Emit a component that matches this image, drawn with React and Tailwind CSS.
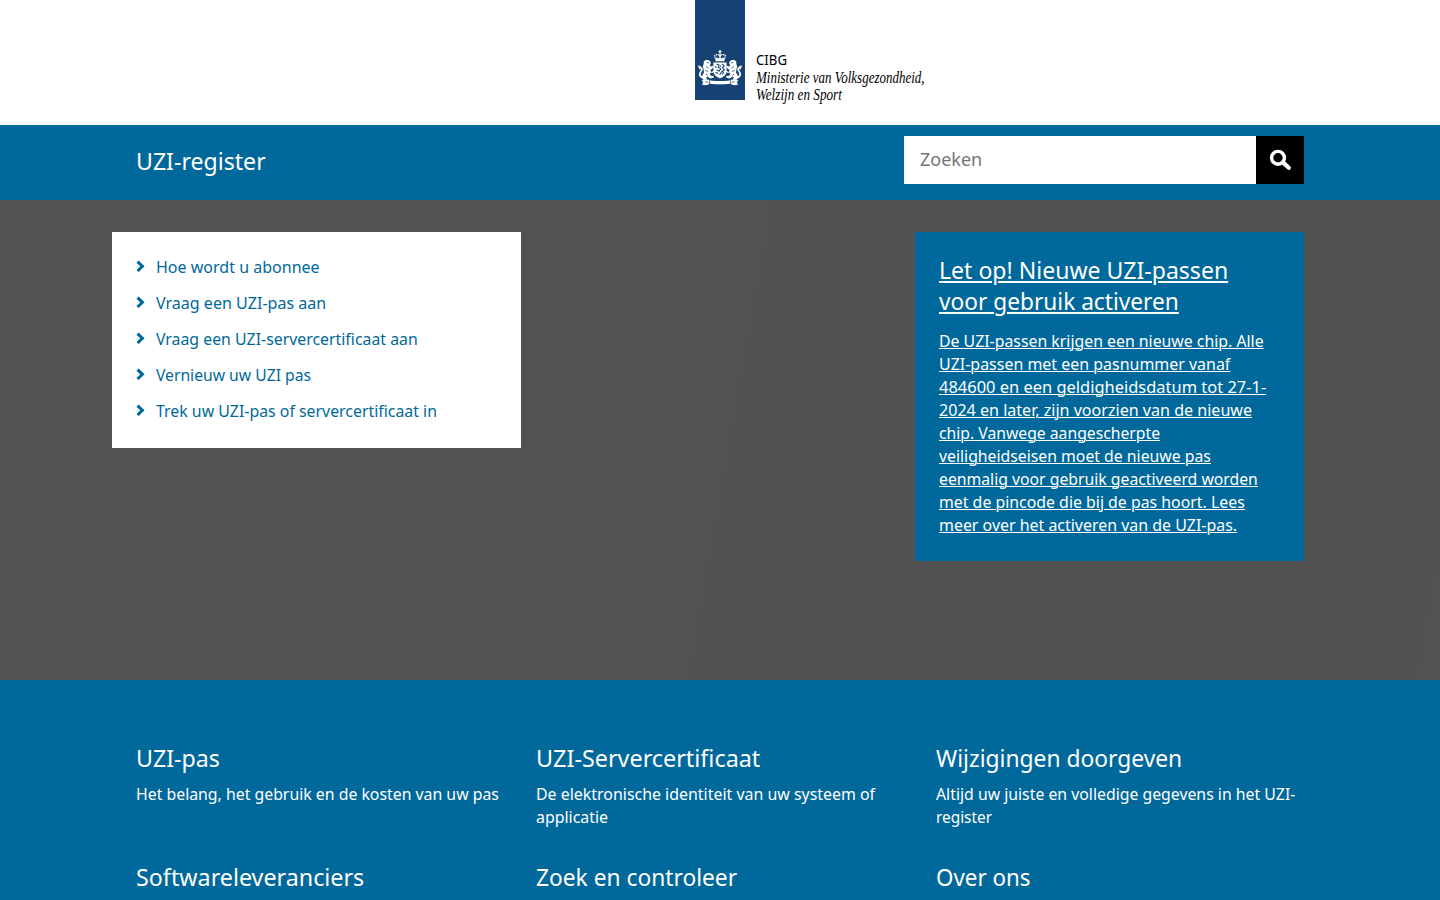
import { useLayoutEffect, useRef, useState } from "react";

// A line of text condensed or widened horizontally to a given width.
function Line({ w, children, className = "" }) {
  const ref = useRef(null);
  const [scale, setScale] = useState(1);
  useLayoutEffect(() => {
    setScale(w / ref.current.offsetWidth);
  }, [w]);
  return (
    <span className="block h-[1lh]" style={{ width: w }}>
      <span
        ref={ref}
        className={`inline-block origin-left whitespace-nowrap align-top ${className}`}
        style={{ transform: `scaleX(${scale})` }}
      >
        {children}
      </span>
    </span>
  );
}

function Lion() {
  return (
    <g>
      <path d="M8.6 16.6 10.4 14.9 13.4 15 15.8 17 15.6 19.2 14.6 20.4 16.4 21.6 18 20.4 18.6 22 16.8 24.2 15.4 24.4 16 27 14.8 29.4 16.6 31 18.6 30.8 18.8 32.8 15 33.4 12.4 31.6 11 32.8 12.6 34.4 8.6 35 6.4 32.8 7.6 29.8 9 27.4 8.4 23.6 7.8 21 8.8 19Z" />
      <path d="M4.6 23.4Q8.4 22.4 6.4 25.6Q3.8 29 5.6 31.6L8 32.4" fill="none" stroke="white" strokeWidth="1.7" />
      <path d="M2.8 20.6 5.4 21 6.6 22.8 4.8 24.4 3.8 22.8Z" />
      <path d="M16.4 27.6 19.4 26.2" stroke="white" strokeWidth="1.3" />
      <path d="M11.2 21.6 13.4 23M10.4 25.4 13.2 26.6M12 17.6 14 17.9M10.8 29.2 12.6 30.2" stroke="#154273" strokeWidth=".8" />
    </g>
  );
}

function Emblem() {
  return (
    <svg viewBox="0 0 50 45" className="h-[45px] w-[50px]" fill="white">
      <Lion />
      <g transform="translate(50 0) scale(-1 1)">
        <Lion />
      </g>
      <path d="M24.4 5h1.2v1.3h1.1v1h-1.1v1.6h-1.2V7.3h-1.1v-1h1.1z" />
      <path d="M20.4 13Q18.6 10.2 21 9.6Q23.2 9.2 25 11.2Q26.8 9.2 29 9.6Q31.4 10.2 29.6 13" fill="none" stroke="white" strokeWidth="1.2" strokeDasharray="1.5 .5" />
      <path d="M24.3 9h1.4v4.4h-1.4zM20.2 13.2 22 12.6 23.4 13.6 25 12.4 26.6 13.6 28 12.6 29.8 13.2 29.4 16.2H20.6Z" />
      <path d="M18.4 17.6H31.6V26.4Q31.2 30.8 25 33.4Q18.8 30.8 18.4 26.4Z" />
      <path d="M21.6 19 24 20 23.4 22.4 25.8 23.6 24.2 26 21.6 25M27 18.8 29 20.8 27.6 22.6 29.4 24.8 26.6 27 24.6 30M20.2 21.4 21.4 23M20.6 27.2 23 28.6M28.8 27.2 27.2 29.4M25.4 20.6 26 21.6" fill="none" stroke="#154273" strokeWidth="1.1" />
      <path d="M6.6 35.4Q9.6 33.8 13.6 34.8L15.4 35.4Q25 36.8 34.6 35.4L36.4 34.8Q40.4 33.8 43.4 35.4L41.8 37 43 39.6Q39.6 41 36.8 39.6L35 38.8Q25 39.8 15 38.8L13.2 39.6Q10.4 41 7 39.6L8.2 37Z" />
      <path d="M14.6 35.4V39M35.4 35.4V39M10.4 37 13.4 37.4M39.6 37 36.6 37.4" stroke="#154273" strokeWidth=".7" />
    </svg>
  );
}

function Chevron() {
  return (
    <svg viewBox="0 0 9 12" className="h-3 w-[9px]" fill="none" stroke="currentColor" strokeWidth="3">
      <path d="M1.5 1.6 6.4 6.3 1.5 11" />
    </svg>
  );
}

const links = [
  ["Hoe wordt u abonnee", 164],
  ["Vraag een UZI-pas aan", 170],
  ["Vraag een UZI-servercertificaat aan", 262],
  ["Vernieuw uw UZI pas", 155],
  ["Trek uw UZI-pas of servercertificaat in", 281],
];

const notice = [
  ["De UZI-passen krijgen een nieuwe chip. Alle", 325],
  ["UZI-passen met een pasnummer vanaf", 291],
  ["484600 en een geldigheidsdatum tot 27-1-", 327],
  ["2024 en later, zijn voorzien van de nieuwe", 313],
  ["chip. Vanwege aangescherpte", 221],
  ["veiligheidseisen moet de nieuwe pas", 272],
  ["eenmalig voor gebruik geactiveerd worden", 319],
  ["met de pincode die bij de pas hoort. Lees", 306],
  ["meer over het activeren van de UZI-pas.", 298],
];

const topics = [
  { title: ["UZI-pas", 84], lines: [["Het belang, het gebruik en de kosten van uw pas", 363]] },
  { title: ["UZI-Servercertificaat", 224], lines: [["De elektronische identiteit van uw systeem of", 339], ["applicatie", 72]] },
  { title: ["Wijzigingen doorgeven", 246], lines: [["Altijd uw juiste en volledige gegevens in het UZI-", 359], ["register", 56]] },
  { title: ["Softwareleveranciers", 228], lines: [] },
  { title: ["Zoek en controleer", 201], lines: [] },
  { title: ["Over ons", 94], lines: [] },
];

export default function App() {
  return (
    <div className="flex h-[900px] w-full flex-col overflow-hidden bg-white font-['Noto_Sans',sans-serif]">
      <header className="flex h-[125px] shrink-0 pl-[695px]">
        <div className="flex h-[100px] w-[50px] flex-col bg-[#154273] pt-[45px]">
          <Emblem />
        </div>
        <div className="ml-[11px] pt-[51px] font-['Liberation_Serif',serif] text-[17px] leading-[17.5px] text-black">
          <Line w={31} className="font-['Noto_Sans',sans-serif] text-[14.5px]">CIBG</Line>
          <Line w={169} className="italic">Ministerie van Volksgezondheid,</Line>
          <Line w={86} className="italic">Welzijn en Sport</Line>
        </div>
      </header>

      <div className="flex h-[75px] shrink-0 justify-between bg-[#01689b] pr-[136px] pl-[136px] pt-[11px]">
        <div className="pt-[9px] text-2xl leading-[31px] text-white">
          <Line w={130}>UZI-register</Line>
        </div>
        <form className="flex h-12 w-[400px]">
          <input
            type="text"
            placeholder="Zoeken"
            className="w-[352px] bg-white px-4 pb-[2px] text-[18px] text-black outline-none placeholder:text-[#757575]"
          />
          <button type="button" aria-label="Zoeken" className="flex w-12 items-center justify-center bg-black">
            <svg viewBox="0 0 48 48" className="size-12" fill="none" stroke="white">
              <circle cx="22" cy="21.8" r="6.4" strokeWidth="3.4" />
              <path d="M27.2 26.6 32.8 31.8" strokeWidth="4.2" strokeLinecap="round" />
            </svg>
          </button>
        </form>
      </div>

      <main className="flex h-[480px] shrink-0 items-start justify-between bg-[#525251] bg-[linear-gradient(100deg,#515251_0%,#525251_25%,#525250_50%,#515151_65%,#525251_100%)] pt-8 pr-[136px] pl-[112px]">
        <ul className="h-[216px] w-[409px] bg-white pt-[17px] pl-6 text-[17px] leading-9 text-[#01689b]">
          {links.map(([text, w]) => (
            <li key={text} className="flex h-9 items-center gap-[11px]">
              <span className="pb-[2px]">
                <Chevron />
              </span>
              <a href="#">
                <Line w={w}>{text}</Line>
              </a>
            </li>
          ))}
        </ul>
        <a href="#" className="block h-[329px] w-[389px] bg-[#01689b] pt-[22px] pl-6 text-white">
          <h2 className="text-2xl leading-[31px]">
            <Line w={289} className="underline decoration-2 underline-offset-[2px]">Let op! Nieuwe UZI-passen</Line>
            <Line w={240} className="underline decoration-2 underline-offset-[2px]">voor gebruik activeren</Line>
          </h2>
          <p className="pt-[13px] text-[17px] leading-[23px]">
            {notice.map(([text, w]) => (
              <Line key={text} w={w} className="underline decoration-1 underline-offset-[1px]">{text}</Line>
            ))}
          </p>
        </a>
      </main>

      <section className="grid h-[220px] shrink-0 grid-cols-[400px_400px_400px] content-start gap-y-[33px] overflow-hidden bg-[#01689b] pt-[62px] pl-[136px] text-white">
        {topics.map(({ title, lines }) => (
          <article key={title[0]}>
            <h2 className="text-2xl leading-[31px]">
              <Line w={title[1]}>{title[0]}</Line>
            </h2>
            <p className="pt-[9px] text-[17px] leading-[23px]">
              {lines.map(([text, w]) => (
                <Line key={text} w={w}>{text}</Line>
              ))}
            </p>
          </article>
        ))}
      </section>
    </div>
  );
}
